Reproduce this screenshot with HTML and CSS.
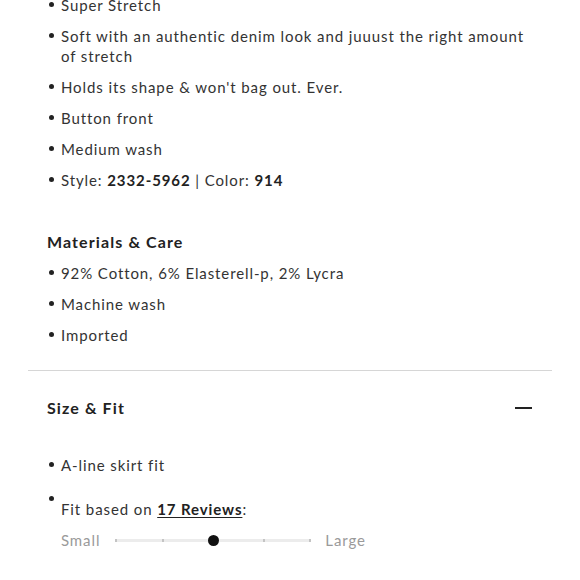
FILE: index.html
```html
<!DOCTYPE html>
<html>
<head>
<meta charset="utf-8">
<link rel="stylesheet" href="styles.css">
</head>
<body>
<div class="page">
  <section class="block top">
    <ul class="bullets first">
      <li>Super Stretch</li>
      <li>Soft with an authentic denim look and juuust the right amount of stretch</li>
      <li>Holds its shape &amp; won't bag out. Ever.</li>
      <li>Button front</li>
      <li>Medium wash</li>
      <li>Style: <b>2332-5962</b> | Color: <b>914</b></li>
    </ul>
    <h3 class="subhead">Materials &amp; Care</h3>
    <ul class="bullets">
      <li>92% Cotton, 6% Elasterell-p, 2% Lycra</li>
      <li>Machine wash</li>
      <li>Imported</li>
    </ul>
  </section>
  <section class="block fit">
    <div class="acc-head">
      <h3 class="subhead">Size &amp; Fit</h3>
      <span class="minus"></span>
    </div>
    <ul class="bullets">
      <li>A-line skirt fit</li>
      <li class="fit-item">
        <div>Fit based on <a href="#">17 Reviews</a>:</div>
        <div class="scale">
          <span class="lbl">Small</span>
          <div class="track">
            <span class="tick"></span>
            <span class="tick"></span>
            <span class="knob"></span>
            <span class="tick"></span>
            <span class="tick"></span>
          </div>
          <span class="lbl">Large</span>
        </div>
      </li>
    </ul>
  </section>
</div>
</body>
</html>
```

FILE: styles.css
```css
html, body {
  margin: 0;
  padding: 0;
  background: #fff;
}
body {
  font-family: "Lato", "Noto Sans", sans-serif;
  font-size: 15px;
  line-height: 20px;
  color: #333;
  letter-spacing: 0.9px;
}
.page {
  margin: 0 28px;
}
.block {
  padding: 0 19px;
}
.top {
  margin-top: -5px;
  padding-bottom: 25px;
  border-bottom: 1px solid #d6d6d6;
}
.bullets {
  list-style: none;
  margin: 0;
  padding: 0;
}
.bullets li {
  position: relative;
  padding-left: 14px;
  margin-bottom: 11px;
}
.bullets li:last-child {
  margin-bottom: 0;
}
.bullets li::before {
  content: "";
  position: absolute;
  left: 2px;
  top: 7px;
  width: 5px;
  height: 5px;
  border-radius: 50%;
  background: #222;
}
.bullets b {
  font-weight: 700;
  color: #222;
}
.subhead {
  margin: 42px 0 11px;
  font-size: 16px;
  line-height: 20px;
  font-weight: 700;
  color: #222;
  letter-spacing: 1.1px;
}
.acc-head {
  display: flex;
  align-items: center;
  justify-content: space-between;
  margin-top: 27px;
  margin-bottom: 37px;
}
.acc-head .subhead {
  margin: 0;
}
.minus {
  display: block;
  width: 17px;
  height: 2px;
  background: #222;
  margin-right: 1px;
}
.fit-item {
  padding-top: 13px;
}
.bullets li.fit-item::before {
  top: 10px;
}
.fit-item a {
  color: #222;
  font-weight: 700;
  text-decoration: underline;
  text-underline-offset: 2px;
}
.scale {
  display: flex;
  align-items: center;
  margin-top: 11px;
}
.lbl {
  color: #9a9a9a;
}
.track {
  position: relative;
  width: 196px;
  height: 3px;
  background: #ececec;
  margin: 0 14px 0 15px;
  display: flex;
  align-items: center;
  justify-content: space-between;
}
.tick {
  width: 2px;
  height: 3px;
  background: #c4c4c4;
}
.knob {
  width: 11px;
  height: 11px;
  border-radius: 50%;
  background: #111;
}
```
